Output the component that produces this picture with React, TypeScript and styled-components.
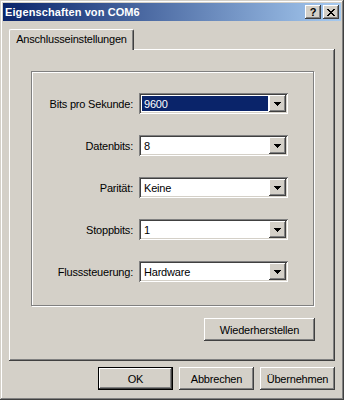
import React from 'react';
import styled, { createGlobalStyle } from 'styled-components';

const face = '#D4D0C8';
const shadow = '#808080';
const dark = '#404040';

const raised = `
  box-shadow:
    inset -1px -1px 0 ${dark},
    inset 1px 1px 0 #fff,
    inset -2px -2px 0 ${shadow},
    inset 2px 2px 0 ${face};
`;

const GlobalStyle = createGlobalStyle`
  body {
    margin: 0;
    background: #fff;
    font-family: "Liberation Sans", Arial, sans-serif;
    font-size: 11px;
    letter-spacing: -0.2px;
    color: #000;
  }
`;

const Window = styled.div`
  box-sizing: border-box;
  width: 344px;
  height: 400px;
  padding: 3px;
  background: ${face};
  display: flex;
  flex-direction: column;
  box-shadow:
    inset -1px -1px 0 ${dark},
    inset 1px 1px 0 ${face},
    inset -2px -2px 0 ${shadow},
    inset 2px 2px 0 #fff;
`;

const TitleBar = styled.div`
  height: 18px;
  display: flex;
  align-items: center;
  padding: 0 2px;
  background: linear-gradient(to right, #0a246a, #a6caf0);
`;

const Caption = styled.div`
  flex: 1;
  color: #fff;
  font-weight: bold;
  font-size: 11px;
  letter-spacing: 0.1px;
`;

const CaptionButtons = styled.div`
  display: flex;
  gap: 2px;
`;

const CaptionButton = styled.div`
  width: 16px;
  height: 14px;
  background: ${face};
  display: flex;
  align-items: center;
  justify-content: center;
  font-weight: bold;
  font-size: 11px;
  line-height: 14px;
  letter-spacing: 0;
  ${raised}
`;

const Client = styled.div`
  flex: 1;
  display: flex;
  flex-direction: column;
  padding: 8px 6px 0 6px;
`;

const TabStrip = styled.div`
  display: flex;
  height: 20px;
`;

const Tab = styled.div`
  position: relative;
  z-index: 1;
  box-sizing: border-box;
  width: 125px;
  height: 21px;
  margin-bottom: -1px;
  background: ${face};
  border-left: 1px solid #fff;
  border-top: 1px solid #fff;
  border-right: 1px solid ${dark};
  border-top-left-radius: 2px;
  border-top-right-radius: 2px;
  box-shadow: inset -1px 0 0 ${shadow};
  display: flex;
  justify-content: center;
  padding-top: 3px;
`;

const TabPanel = styled.div`
  box-sizing: border-box;
  height: 312px;
  padding: 22px 20px 0 22px;
  background: ${face};
  box-shadow:
    inset -1px -1px 0 ${dark},
    inset 1px 1px 0 #fff,
    inset -2px -2px 0 ${shadow};
  display: flex;
  flex-direction: column;
`;

const GroupBox = styled.div`
  box-sizing: border-box;
  width: 283px;
  height: 235px;
  border: 1px solid ${shadow};
  box-shadow: 1px 1px 0 #fff, inset 1px 1px 0 #fff;
  padding-top: 21px;
  display: flex;
  flex-direction: column;
  gap: 21px;
`;

const FieldRow = styled.div`
  display: grid;
  grid-template-columns: 101px 149px;
  column-gap: 6px;
  align-items: center;
  height: 21px;
`;

const FieldLabel = styled.div`
  text-align: right;
  white-space: nowrap;
`;

const Combo = styled.div`
  box-sizing: border-box;
  height: 21px;
  padding: 2px;
  display: flex;
  background: #fff;
  box-shadow:
    inset 1px 1px 0 ${shadow},
    inset -1px -1px 0 #fff,
    inset 2px 2px 0 ${dark},
    inset -2px -2px 0 ${face};
`;

const ComboText = styled.div<{ $selected?: boolean }>`
  flex: 1;
  display: flex;
  align-items: center;
  margin: 1px;
  padding-left: 2px;
  background: ${(p) => (p.$selected ? '#0a246a' : '#fff')};
  color: ${(p) => (p.$selected ? '#fff' : '#000')};
`;

const DropButton = styled.div`
  width: 17px;
  height: 17px;
  background: ${face};
  display: flex;
  align-items: center;
  justify-content: center;
  ${raised}
`;

const PanelFooter = styled.div`
  display: flex;
  justify-content: flex-end;
  margin-top: 12px;
`;

const Button = styled.div<{ $width?: number; $default?: boolean }>`
  box-sizing: border-box;
  width: ${(p) => p.$width || 75}px;
  height: 23px;
  background: ${face};
  display: flex;
  align-items: center;
  justify-content: center;
  ${(p) =>
    p.$default
      ? `border: 1px solid #000;
  box-shadow:
    inset -1px -1px 0 ${dark},
    inset 1px 1px 0 #fff,
    inset -2px -2px 0 ${shadow};`
      : raised}
`;

const DialogButtons = styled.div`
  display: flex;
  justify-content: flex-end;
  gap: 6px;
  margin-top: 6px;
`;

const CloseGlyph = () => (
  <svg width="8" height="7" viewBox="0 0 8 7" shapeRendering="crispEdges">
    <path
      fill="#000"
      d="M0 0h2v1H0zM6 0h2v1H6zM1 1h2v1H1zM5 1h2v1H5zM2 2h4v1H2zM3 3h2v1H3zM2 4h4v1H2zM1 5h2v1H1zM5 5h2v1H5zM0 6h2v1H0zM6 6h2v1H6z"
    />
  </svg>
);

const ArrowGlyph = () => (
  <svg width="7" height="4" viewBox="0 0 7 4" shapeRendering="crispEdges">
    <path fill="#000" d="M0 0h7v1H0zM1 1h5v1H1zM2 2h3v1H2zM3 3h1v1H3z" />
  </svg>
);

const fields = [
  { label: 'Bits pro Sekunde:', value: '9600', selected: true },
  { label: 'Datenbits:', value: '8' },
  { label: 'Parität:', value: 'Keine' },
  { label: 'Stoppbits:', value: '1' },
  { label: 'Flusssteuerung:', value: 'Hardware' },
];

export default function App() {
  return (
    <>
      <GlobalStyle />
      <Window>
        <TitleBar>
          <Caption>Eigenschaften von COM6</Caption>
          <CaptionButtons>
            <CaptionButton>?</CaptionButton>
            <CaptionButton>
              <CloseGlyph />
            </CaptionButton>
          </CaptionButtons>
        </TitleBar>
        <Client>
          <TabStrip>
            <Tab>Anschlusseinstellungen</Tab>
          </TabStrip>
          <TabPanel>
            <GroupBox>
              {fields.map((f) => (
                <FieldRow key={f.label}>
                  <FieldLabel>{f.label}</FieldLabel>
                  <Combo>
                    <ComboText $selected={f.selected}>{f.value}</ComboText>
                    <DropButton>
                      <ArrowGlyph />
                    </DropButton>
                  </Combo>
                </FieldRow>
              ))}
            </GroupBox>
            <PanelFooter>
              <Button $width={111}>Wiederherstellen</Button>
            </PanelFooter>
          </TabPanel>
          <DialogButtons>
            <Button $default>OK</Button>
            <Button>Abbrechen</Button>
            <Button>Übernehmen</Button>
          </DialogButtons>
        </Client>
      </Window>
    </>
  );
}
